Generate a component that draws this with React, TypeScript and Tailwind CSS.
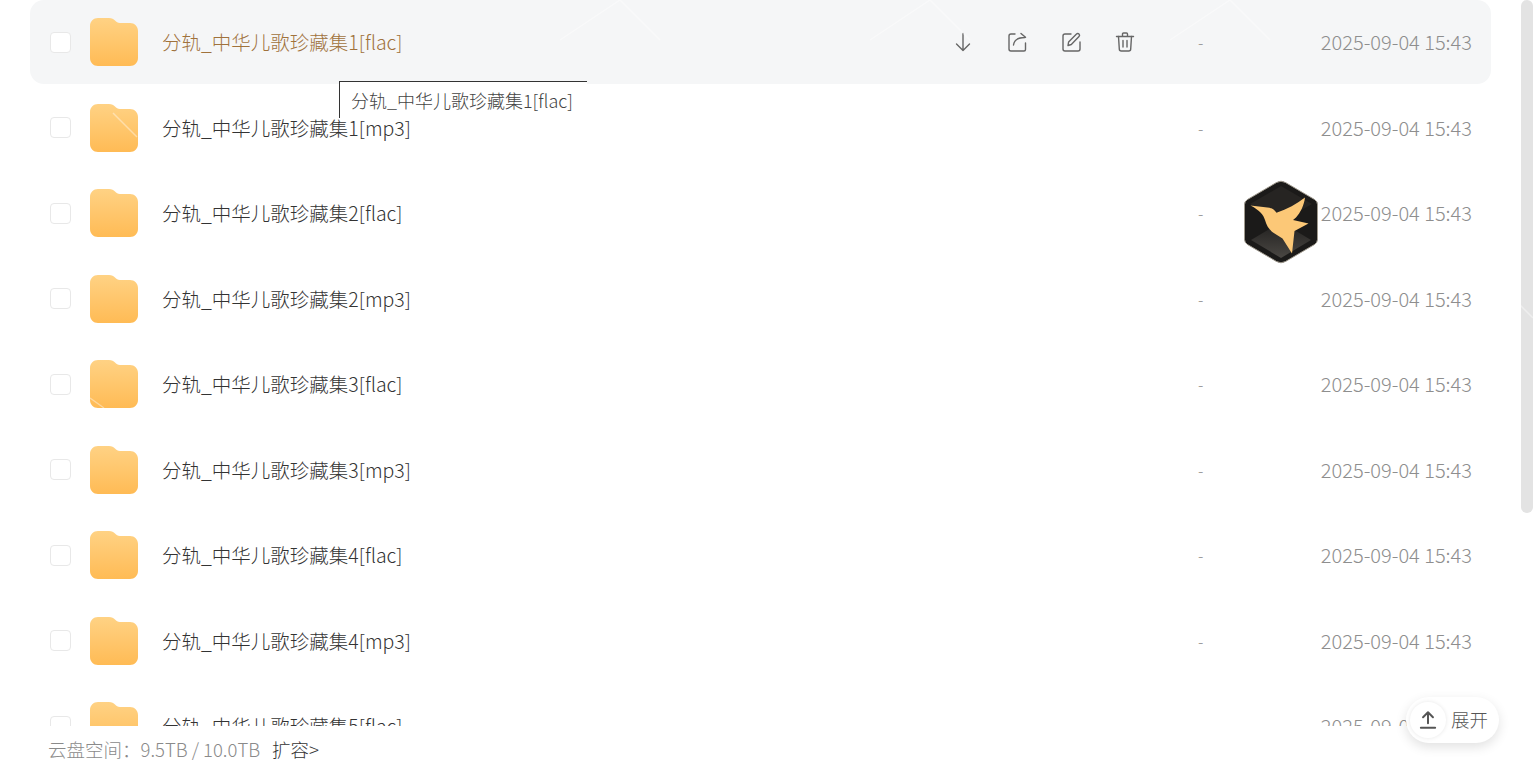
import React from 'react';

const files = ['1[flac]', '1[mp3]', '2[flac]', '2[mp3]', '3[flac]', '3[mp3]', '4[flac]', '4[mp3]', '5[flac]'];

function FolderIcon({ id }: { id: number }) {
  return (
    <svg width="48" height="48" viewBox="0 0 48 48" className="shrink-0">
      <defs>
        <linearGradient id={`folder-${id}`} x1="0" y1="0" x2="0" y2="1">
          <stop offset="0" stopColor="#ffd284" />
          <stop offset="1" stopColor="#ffbb55" />
        </linearGradient>
      </defs>
      <path
        d="M8 0h11c3 0 4.500 1 6 2.500C26.500 4 27.500 5 30 5h10c4.500 0 8 3.500 8 8v27c0 4.500-3.500 8-8 8H8c-4.500 0-8-3.500-8-8V8c0-4.500 3.500-8 8-8z"
        fill={`url(#folder-${id})`}
      />
    </svg>
  );
}

function Actions() {
  return (
    <div className="flex w-[186px] shrink-0 gap-[30px] text-[#666666]">
      <svg width="24" height="24" viewBox="0 0 24 24" fill="none" stroke="currentColor" strokeWidth="1.4" strokeLinecap="round" strokeLinejoin="round">
        <path d="M12 3.500v17M5.500 14l6.500 6.500 6.500-6.500" />
      </svg>
      <svg width="24" height="24" viewBox="0 0 24 24" fill="none" stroke="currentColor" strokeWidth="1.4" strokeLinecap="round" strokeLinejoin="round">
        <path d="M10 4H6a2 2 0 0 0-2 2v13a2 2 0 0 0 2 2h13a1.500 1.500 0 0 0 1.500-1.500V13" />
        <path d="M8.500 15c.5-4 3.500-7.500 11.500-7.500M16 3.500l4.500 3.800" />
      </svg>
      <svg width="24" height="24" viewBox="0 0 24 24" fill="none" stroke="currentColor" strokeWidth="1.4" strokeLinecap="round" strokeLinejoin="round">
        <path d="M12 4H6a2 2 0 0 0-2 2v13a2 2 0 0 0 2 2h13a2 2 0 0 0 2-2v-7" />
        <path d="M9 15.500l.6-3.500 7.900-8a1.700 1.700 0 0 1 2.500 0 1.800 1.800 0 0 1 0 2.500l-7.700 8z" />
      </svg>
      <svg width="24" height="24" viewBox="0 0 24 24" fill="none" stroke="currentColor" strokeWidth="1.4" strokeLinecap="round" strokeLinejoin="round">
        <path d="M3.500 6.500h17M9.500 6.500V4a1 1 0 0 1 1-1h3a1 1 0 0 1 1 1v2.500" />
        <path d="M5.500 6.500l.8 12.500a2 2 0 0 0 2 2h7.400a2 2 0 0 0 2-2l.8-12.500M10 10.500v6.500M14 10.500v6.500" />
      </svg>
    </div>
  );
}

function FileRow({ suffix, index }: { suffix: string; index: number }) {
  const hovered = index === 0;
  return (
    <div className="h-[85.5px] shrink-0">
      <div className={`flex h-[84px] items-center rounded-[14px] pl-5 pr-[19px] ${hovered ? 'bg-[#f5f6f7]' : ''}`}>
        <div className="h-[21px] w-[21px] shrink-0 rounded-[4px] border border-[#e8e8e8] bg-white" />
        <div className="ml-[19px]">
          <FolderIcon id={index} />
        </div>
        <div className={`ml-6 min-w-0 flex-1 text-[19.500px] ${hovered ? 'text-[#a0723c]' : 'text-[#333333]'}`}>
          分轨_中华儿歌珍藏集{suffix}
        </div>
        {hovered && <Actions />}
        <div className="w-[183px] shrink-0 pl-[61px] text-[16px] text-[#909090]">-</div>
        <div className="w-[152px] shrink-0 whitespace-nowrap text-right text-[20px] text-[#8e8e8e]">2025-09-04 15:43</div>
      </div>
    </div>
  );
}

function BirdLogo() {
  return (
    <svg width="78" height="86" viewBox="0 0 78 86" className="absolute left-[1242px] top-[179px]">
      <defs>
        <linearGradient id="facet-bottom" x1="0" y1="0" x2="0" y2="1">
          <stop offset="0" stopColor="#201f1e" />
          <stop offset="1" stopColor="#4a4743" />
        </linearGradient>
      </defs>
      <path
        d="M34.500 3.500a9 9 0 0 1 9 0l29 17a6 6 0 0 1 3 5v35a6 6 0 0 1-3 5l-29 17a9 9 0 0 1-9 0l-29-17a6 6 0 0 1-3-5v-35a6 6 0 0 1 3-5z"
        fill="#1b1a19"
        stroke="#a09a8e"
        strokeWidth="1"
      />
      <path d="M39 7L70 25 39 43 8 25z" fill="#262422" />
      <path d="M39 79L9 61l30-18 30 18z" fill="url(#facet-bottom)" />
      <path
        d="M8.500 26.500l19 2.200c3 .8 5 2.500 7 5C45 30 55 25 63 18.500c-1 8-4.500 15-9 20l-3 2.500 15.500 3.500-14 7.500-2.500 22.500-9.500-15-9.500-6c-4-3-6.500-7-8-12.500-1.500-5-5-9.500-14.500-14.500z"
        fill="#fcc877"
      />
    </svg>
  );
}

export default function App() {
  return (
    <div className="relative flex h-[767px] flex-col overflow-hidden bg-white font-['Noto_Sans_CJK_SC','Noto_Sans',sans-serif] font-light">
      <div className="flex h-[726px] shrink-0">
        <div className="ml-[30px] flex w-[1461px] flex-col overflow-hidden">
          {files.map((suffix, i) => (
            <FileRow key={suffix} suffix={suffix} index={i} />
          ))}
        </div>
        <div className="ml-[30px] h-[513px] w-[12px] rounded-full bg-[#e3e3e3]" />
      </div>

      <div className="flex items-center pl-12 pt-[10px] text-[18.500px] text-[#8a8a8a]">
        <span>云盘空间：9.5TB / 10.0TB</span>
        <span className="ml-3 text-[#333333]">扩容&gt;</span>
      </div>

      <div className="absolute left-[339px] top-[81px] h-[37px] w-[248px] border-l border-t border-[#333333] bg-white pl-[11px] text-[18px] leading-[37px] text-[#444444]">
        分轨_中华儿歌珍藏集1[flac]
      </div>

      <BirdLogo />

      <div className="absolute left-[1406px] top-[697px] flex h-[46px] w-[93px] items-center rounded-full bg-white pl-1 shadow-[0_4px_12px_rgba(0,0,0,0.12)]">
        <div className="flex h-9 w-9 items-center justify-center rounded-full shadow-[0_0_4px_rgba(0,0,0,0.1)]">
          <svg width="22" height="22" viewBox="0 0 20 20" fill="none" stroke="#555555" strokeWidth="1.800" strokeLinecap="round" strokeLinejoin="round">
            <path d="M10 13V3M5.500 7.500L10 3l4.500 4.500M3.500 17h13" />
          </svg>
        </div>
        <span className="ml-[5px] text-[18.500px] text-[#555555]">展开</span>
      </div>

      <svg className="pointer-events-none absolute left-0 top-0" width="1536" height="767" fill="none" stroke="#ffffff" strokeOpacity="0.4" strokeWidth="1.500">
        <path d="M113 113l24 24M90 398l14 10M560 40l60-40 40 40M870 40l60-40 40 40M1170 40l60-40 40 40M1515 300l18 18" />
      </svg>
    </div>
  );
}
